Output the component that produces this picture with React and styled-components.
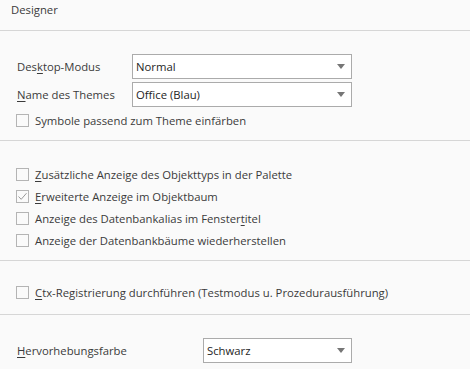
import React from "react";
import styled, { createGlobalStyle } from "styled-components";

const Global = createGlobalStyle`
  html, body { margin: 0; padding: 0; background: #fafafa; }
  body { font-family: "Open Sans", "Noto Sans", sans-serif; font-size: 11.3px; color: #3b3b3b; }
`;

const Page = styled.div`
  width: 470px;
  height: 369px;
  background: #fafafa;
  overflow: hidden;
`;

const Header = styled.div`
  height: 31px;
  box-sizing: border-box;
  padding: 2px 0 0 11px;
  line-height: 16px;
  border-bottom: 1px solid #d6d6d6;
`;

const Section = styled.div`
  padding: ${(p) => p.$pt}px 0 ${(p) => p.$pb}px 0;
  border-bottom: ${(p) => (p.$last ? "none" : "1px solid #d6d6d6")};
  display: flex;
  flex-direction: column;
`;

const FieldRow = styled.div`
  display: flex;
  align-items: center;
  height: 25px;
  padding-left: 17px;
  margin-bottom: ${(p) => p.$mb || 0}px;
`;

const Label = styled.label`
  width: ${(p) => p.$w}px;
  flex: none;
  white-space: nowrap;
`;

const SelectBox = styled.div`
  box-sizing: border-box;
  width: ${(p) => p.$w}px;
  height: 25px;
  border: 1px solid #ababab;
  background: #fff;
  display: flex;
  align-items: center;
  padding: 0 6px 0 3px;
  color: #1e1e1e;
`;

const SelectText = styled.span`
  flex: 1;
`;

const Arrow = styled.span`
  width: 0;
  height: 0;
  border-left: 4px solid transparent;
  border-right: 4px solid transparent;
  border-top: 5px solid #767676;
`;

const CheckRow = styled.div`
  display: flex;
  align-items: center;
  height: 22px;
  padding-left: 16px;
  gap: 6px;
  white-space: nowrap;
`;

const Box = styled.span`
  box-sizing: border-box;
  width: 13px;
  height: 13px;
  border: 1px solid #b4b4b4;
  background: #fafafa;
  display: flex;
  align-items: center;
  justify-content: center;
  flex: none;
`;

const U = styled.span`
  text-decoration: underline;
  text-underline-offset: 2px;
`;

function Check({ checked, children }) {
  return (
    <CheckRow>
      <Box>
        {checked && (
          <svg width="11" height="11" viewBox="0 0 11 11">
            <path d="M1.5 5.5 L4.2 8.3 L9.5 2.2" fill="none" stroke="#9a9a9a" strokeWidth="1" />
          </svg>
        )}
      </Box>
      <span>{children}</span>
    </CheckRow>
  );
}

function Select({ w, value }) {
  return (
    <SelectBox $w={w}>
      <SelectText>{value}</SelectText>
      <Arrow />
    </SelectBox>
  );
}

export default function App() {
  return (
    <Page>
      <Global />
      <Header>Designer</Header>
      <Section $pt={23} $pb={9}>
        <FieldRow $mb={3}>
          <Label $w={115}>Des<U>k</U>top-Modus</Label>
          <Select w={220} value="Normal" />
        </FieldRow>
        <FieldRow $mb={2}>
          <Label $w={115}><U>N</U>ame des Themes</Label>
          <Select w={220} value="Office (Blau)" />
        </FieldRow>
        <Check>Symbole passend zum Theme einfärben</Check>
      </Section>
      <Section $pt={22} $pb={9}>
        <Check><U>Z</U>usätzliche Anzeige des Objekttyps in der Palette</Check>
        <Check checked><U>E</U>rweiterte Anzeige im Objektbaum</Check>
        <Check>Anzeige des Datenbankalias im Fenster<U>t</U>itel</Check>
        <Check>Anzeige der Datenbankbäume wiederherstellen</Check>
      </Section>
      <Section $pt={20} $pb={11}>
        <Check><U>C</U>tx-Registrierung durchführen (Testmodus u. Prozedurausführung)</Check>
      </Section>
      <Section $pt={23} $pb={0} $last>
        <FieldRow>
          <Label $w={186}><U>H</U>ervorhebungsfarbe</Label>
          <Select w={149} value="Schwarz" />
        </FieldRow>
      </Section>
    </Page>
  );
}
